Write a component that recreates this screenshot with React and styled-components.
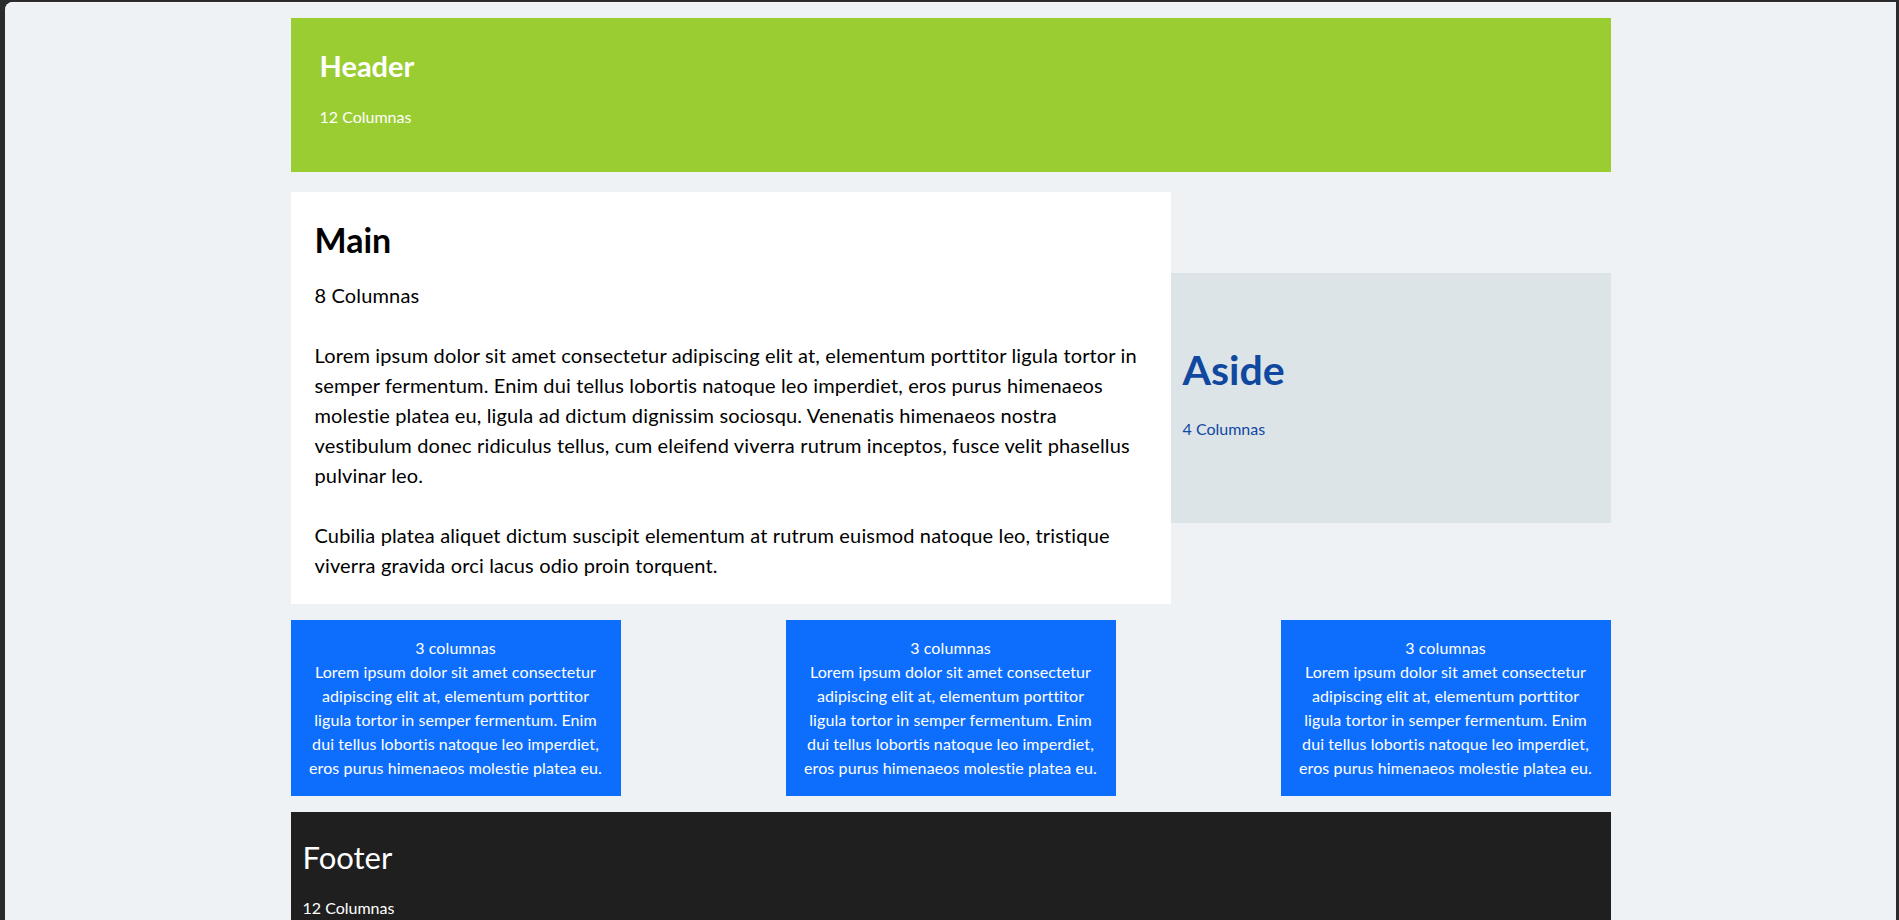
import React from "react";
import styled, { createGlobalStyle } from "styled-components";

const GlobalStyle = createGlobalStyle`
  html, body {
    margin: 0;
    padding: 0;
    overflow: hidden;
    background: #2b2b2b;
  }
  body {
    font-family: Lato, "Noto Sans", sans-serif;
  }
`;

const Window = styled.div`
  margin: 2px 3px 0 5px;
  height: calc(100vh - 2px);
  background: #eef2f5;
  border-top-left-radius: 8px;
  box-shadow: inset 0 1px 0 #f7f8f9;
  overflow: hidden;
`;

const Container = styled.div`
  width: 1320px;
  margin: 0 auto;
  padding-top: 16px;
  display: flex;
  flex-direction: column;
`;

const Header = styled.header`
  background: yellowgreen;
  color: #fff;
  padding: 31px 29px 44px;
  height: 154px;
  box-sizing: border-box;
`;

const Title = styled.h2`
  margin: 0;
  font-size: ${(p) => p.size}px;
  font-weight: ${(p) => p.weight || 700};
  line-height: 1.2;
  color: inherit;
`;

const Small = styled.p`
  margin: ${(p) => p.gap || 21}px 0 0;
  font-size: 16px;
  line-height: 1.5;
  color: inherit;
`;

const Row = styled.div`
  display: flex;
  align-items: center;
  margin-top: 20px;
`;

const Main = styled.main`
  width: 880px;
  box-sizing: border-box;
  background: #fff;
  color: #000;
  padding: 28px 24px 24px;
`;

const Text = styled.p`
  margin: ${(p) => p.gap || 0}px 0 0;
  font-size: 20px;
  line-height: 30px;
  letter-spacing: 0.15px;
`;

const Aside = styled.aside`
  width: 440px;
  height: 250px;
  box-sizing: border-box;
  background: #dde4e8;
  color: #1048a0;
  padding: 72px 12px 0;
`;

const Cards = styled.div`
  display: flex;
  justify-content: space-between;
  margin-top: 16px;
`;

const Card = styled.div`
  width: 330px;
  box-sizing: border-box;
  padding: 16px;
  background: #0d6efd;
  color: #fff;
  text-align: center;
  font-size: 16px;
  line-height: 24px;
  letter-spacing: 0.1px;
`;

const Footer = styled.footer`
  margin-top: 16px;
  background: #1f1f1f;
  color: #fff;
  padding: 27px 12px 24px;
`;

const cardText =
  "Lorem ipsum dolor sit amet consectetur adipiscing elit at, elementum porttitor ligula tortor in semper fermentum. Enim dui tellus lobortis natoque leo imperdiet, eros purus himenaeos molestie platea eu.";

export default function App() {
  return (
    <>
      <GlobalStyle />
      <Window>
        <Container>
          <Header>
            <Title size={29}>Header</Title>
            <Small>12 Columnas</Small>
          </Header>

          <Row>
            <Main>
              <Title as="h1" size={34}>Main</Title>
              <Text gap={19}>8 Columnas</Text>
              <Text gap={30}>
                Lorem ipsum dolor sit amet consectetur adipiscing elit at, elementum porttitor ligula tortor in
                semper fermentum. Enim dui tellus lobortis natoque leo imperdiet, eros purus himenaeos molestie
                platea eu, ligula ad dictum dignissim sociosqu. Venenatis himenaeos nostra vestibulum donec
                ridiculus tellus, cum eleifend viverra rutrum inceptos, fusce velit phasellus pulvinar leo.
              </Text>
              <Text gap={30}>
                Cubilia platea aliquet dictum suscipit elementum at rutrum euismod natoque leo, tristique viverra
                gravida orci lacus odio proin torquent.
              </Text>
            </Main>
            <Aside>
              <Title as="h1" size={41}>Aside</Title>
              <Small gap={23}>4 Columnas</Small>
            </Aside>
          </Row>

          <Cards>
            {[1, 2, 3].map((n) => (
              <Card key={n}>
                3 columnas
                <br />
                {cardText}
              </Card>
            ))}
          </Cards>

          <Footer>
            <Title size={31} weight={400}>Footer</Title>
            <Small gap={20}>12 Columnas</Small>
          </Footer>
        </Container>
      </Window>
    </>
  );
}
